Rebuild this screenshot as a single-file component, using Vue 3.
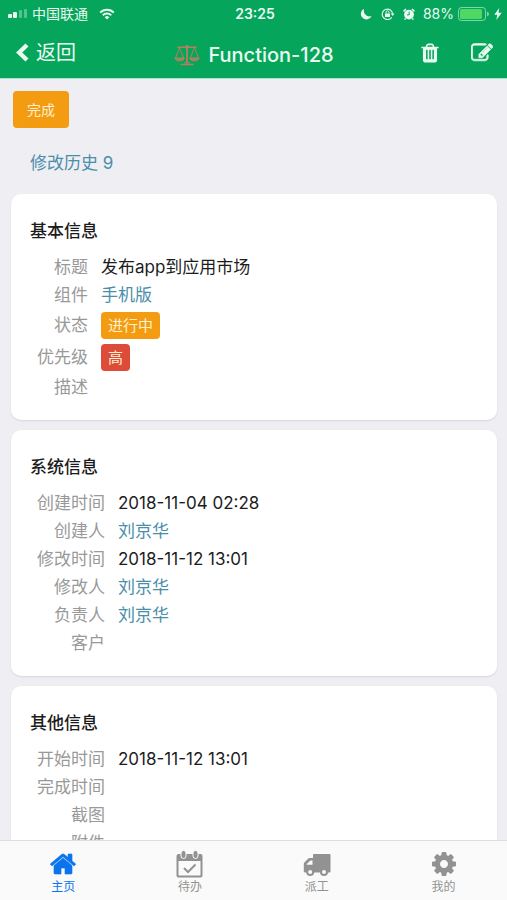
<script setup>
import { ref } from 'vue'

const cards = [
  {
    title: '基本信息',
    rows: [
      { label: '标题', value: '发布app到应用市场' },
      { label: '组件', value: '手机版', type: 'link' },
      { label: '状态', value: '进行中', type: 'badge', tone: 'orange' },
      { label: '优先级', value: '高', type: 'badge', tone: 'red' },
      { label: '描述', value: '' },
    ],
  },
  {
    title: '系统信息',
    rows: [
      { label: '创建时间', value: '2018-11-04 02:28' },
      { label: '创建人', value: '刘京华', type: 'link' },
      { label: '修改时间', value: '2018-11-12 13:01' },
      { label: '修改人', value: '刘京华', type: 'link' },
      { label: '负责人', value: '刘京华', type: 'link' },
      { label: '客户', value: '' },
    ],
  },
  {
    title: '其他信息',
    rows: [
      { label: '开始时间', value: '2018-11-12 13:01' },
      { label: '完成时间', value: '' },
      { label: '截图', value: '' },
      { label: '附件', value: '' },
    ],
  },
]

const tabs = [
  { id: 'home', label: '主页' },
  { id: 'todo', label: '待办' },
  { id: 'dispatch', label: '派工' },
  { id: 'mine', label: '我的' },
]
const active = ref('home')
</script>

<template>
  <div class="app">
    <header class="header">
      <div class="status">
        <div class="status-side">
          <svg class="signal" viewBox="0 0 20 10" aria-hidden="true">
            <rect x="0" y="5" width="4" height="4" rx="1" />
            <rect x="5" y="3" width="4" height="6" rx="1" />
            <rect x="11" y="1" width="3" height="8" rx="1" opacity=".35" />
            <rect x="16" y="0" width="3" height="9" rx="1" opacity=".35" />
          </svg>
          <span>中国联通</span>
          <svg class="wifi" viewBox="0 0 16 12" fill="none" stroke="currentColor" stroke-width="2" aria-hidden="true">
            <path d="M1.2 4.6a9.6 9.6 0 0 1 13.6 0" fill="none" />
            <path d="M3.8 7.3a6 6 0 0 1 8.400 0" fill="none" />
            <path d="M8 11.6 5.7 9.2a3.3 3.3 0 0 1 4.6 0z" fill="currentColor" stroke="none" />
          </svg>
        </div>
        <span class="time">23:25</span>
        <div class="status-side right">
          <svg class="s-icon" viewBox="0 0 12 12" aria-hidden="true">
            <path d="M4.2.7A5.6 5.6 0 1 0 11.6 8 5.7 5.7 0 0 1 4.2.7z" />
          </svg>
          <svg class="s-icon lock" viewBox="0 0 14 12" aria-hidden="true">
            <path d="M10.8 9.2A5.2 5.2 0 1 1 11.6 5.6" fill="none" stroke="currentColor" stroke-width="1.1" />
            <path d="M9.6 5.4h4L11.7 8z" />
            <rect x="4" y="5.5" width="5" height="3.4" rx=".5" />
            <path d="M5 5.6V4.4a1.5 1.5 0 0 1 3 0v1.2" fill="none" stroke="currentColor" />
          </svg>
          <svg class="s-icon alarm" viewBox="0 0 12 12" aria-hidden="true">
            <circle cx="6" cy="6.6" r="4.9" />
            <path d="M.6 3.4 3 1M11.4 3.4 9 1M2.6 10.4l-1 1.2M9.4 10.4l1 1.2" stroke="currentColor" stroke-width="1.5" />
            <path d="M6.2 3.8v3H4" fill="none" stroke="#05a55b" />
          </svg>
          <span class="percent">88%</span>
          <svg class="battery" viewBox="0 0 31 14" aria-hidden="true">
            <rect x=".5" y=".5" width="27" height="13" rx="3" fill="none" stroke="currentColor" opacity=".55" />
            <rect x="2" y="2" width="22" height="10" rx="1.5" fill="#4fd964" />
            <path d="M29 4.5q2 .8 2 2.5t-2 2.5z" opacity=".55" />
          </svg>
          <svg class="bolt" viewBox="0 0 8 12" aria-hidden="true">
            <path d="M5.2 0 .3 6.7h3L2.3 12l5.4-7.2H4.5z" />
          </svg>
        </div>
      </div>

      <nav class="nav">
        <a class="back" href="#back">
          <svg class="chevron" viewBox="0 0 14 20" aria-hidden="true">
            <path d="M12 2 4.200 9.500l7.800 7.500" fill="none" stroke="currentColor" stroke-width="4.400" />
          </svg>
          <span>返回</span>
        </a>
        <h1 class="title">
          <svg class="scale" viewBox="0 0 26 22" stroke="currentColor" aria-hidden="true">
            <path d="M13 1.5v18" stroke-width="1.8" />
            <path d="M3.500 3.200h19M6.500 20.600h13" stroke-width="1.500" />
            <path d="M10 18.800h6" />
            <circle cx="13" cy="3" r="1.400" />
            <path d="M5.500 3.600 1.500 14M5.500 3.600 9.700 14M20.500 3.600 16.300 14M20.500 3.600l4 10.400" />
            <path d="M.800 14h9.600q-.700 3-4.800 3T.800 14zM15.600 14h9.600q-.700 3-4.800 3t-4.800-3z" fill-opacity=".8" />
          </svg>
          <span>Function-128</span>
        </h1>
        <div class="actions">
          <button type="button" class="icon-button" aria-label="删除">
            <svg viewBox="0 0 1792 1792" aria-hidden="true"><path d="M704 1376v-704q0-14-9-23t-23-9h-64q-14 0-23 9t-9 23v704q0 14 9 23t23 9h64q14 0 23-9t9-23zm256 0v-704q0-14-9-23t-23-9h-64q-14 0-23 9t-9 23v704q0 14 9 23t23 9h64q14 0 23-9t9-23zm256 0v-704q0-14-9-23t-23-9h-64q-14 0-23 9t-9 23v704q0 14 9 23t23 9h64q14 0 23-9t9-23zm-544-992h448l-48-117q-7-9-17-11h-317q-10 2-17 11zm928 32v64q0 14-9 23t-23 9h-96v948q0 83-47 143.5t-113 60.5h-832q-66 0-113-58.5t-47-141.5v-952h-96q-14 0-23-9t-9-23v-64q0-14 9-23t23-9h309l70-167q15-37 54-63t79-26h320q40 0 79 26t54 63l70 167h309q14 0 23 9t9 23z" /></svg>
          </button>
          <button type="button" class="icon-button" aria-label="编辑">
            <svg viewBox="0 0 1792 1792" stroke="currentColor" stroke-width="50" aria-hidden="true"><path d="M888 1184l116-116-152-152-116 116v56h96v96h56zm440-720q-16-16-33 1l-350 350q-17 17-1 33t33-1l350-350q17-17 1-33zm80 594v190q0 119-84.5 203.5t-203.5 84.5h-832q-119 0-203.5-84.5t-84.5-203.5v-832q0-119 84.5-203.5t203.5-84.5h832q63 0 117 25 15 7 18 23 3 17-9 29l-49 49q-14 14-32 8-23-6-45-6h-832q-66 0-113 47t-47 113v832q0 66 47 113t113 47h832q66 0 113-47t47-113v-126q0-13 9-22l64-64q15-15 35-7t20 29zm-96-738l288 288-672 672h-288v-288zm444 132l-92 92-288-288 92-92q28-28 68-28t68 28l152 152q28 28 28 68t-28 68z" /></svg>
          </button>
        </div>
      </nav>
    </header>

    <main class="content">
      <button type="button" class="done">完成</button>
      <a class="history" href="#history">修改历史 9</a>

      <section v-for="card in cards" :key="card.title" class="card">
        <h2 class="card-title">{{ card.title }}</h2>
        <dl class="fields">
          <template v-for="row in card.rows" :key="row.label">
            <dt :class="{ tall: row.type === 'badge' }">{{ row.label }}</dt>
            <dd>
              <a v-if="row.type === 'link'" href="#detail">{{ row.value }}</a>
              <span v-else-if="row.type === 'badge'" class="badge" :class="row.tone">{{ row.value }}</span>
              <template v-else>{{ row.value }}</template>
            </dd>
          </template>
        </dl>
      </section>
    </main>

    <nav class="tabbar">
      <button
        v-for="tab in tabs"
        :key="tab.id"
        type="button"
        class="tab"
        :class="{ active: active === tab.id }"
        @click="active = tab.id"
      >
        <svg v-if="tab.id === 'home'" viewBox="0 0 1792 1792" stroke="currentColor" stroke-width="40" aria-hidden="true"><path d="M1472 992v480q0 26-19 45t-45 19h-384v-384h-256v384h-384q-26 0-45-19t-19-45v-480q0-1 .5-3t.5-3l575-474 575 474q1 2 1 6zm223-69l-62 74q-8 9-21 11h-3q-13 0-21-7l-692-577-692 577q-12 8-24 7-13-2-21-11l-62-74q-8-10-7-23.5t11-21.5l719-599q32-26 76-26t76 26l244 204v-195q0-14 9-23t23-9h192q14 0 23 9t9 23v408l219 182q10 8 11 21.5t-7 23.5z" /></svg>
        <svg v-else-if="tab.id === 'todo'" viewBox="0 0 28 28" aria-hidden="true">
          <path d="M2.500 4h22q2 0 2 2v19.500q0 2-2 2h-22q-2 0-2-2V6q0-2 2-2zm0 7v14.500h22V11z" fill-rule="evenodd" />
          <rect x="5" y=".5" width="5" height="8" rx="2.500" class="ring" />
          <rect x="17" y=".5" width="5" height="8" rx="2.500" class="ring" />
          <path d="m8 18 4 4 7.500-7.500" fill="none" stroke="currentColor" stroke-width="2" />
        </svg>
        <svg v-else-if="tab.id === 'dispatch'" viewBox="0 0 28 28" aria-hidden="true">
          <path d="M11 4h15.500q1 0 1 1v16.500q0 1-1 1H2q-1.200 0-1.200-1.200V14q0-1 .7-1.800l3-3Q5.500 8 7 8h3V5q0-1 1-1zM9.500 10.500h-2L3.700 14v.7h5.800z" fill-rule="evenodd" />
          <circle cx="7.200" cy="22" r="3" class="wheel" />
          <circle cx="21" cy="22" r="3" class="wheel" />
        </svg>
        <svg v-else viewBox="0 0 1792 1792" aria-hidden="true"><path d="M1152 896q0-106-75-181t-181-75-181 75-75 181 75 181 181 75 181-75 75-181zm512-109v222q0 12-8 23t-20 13l-185 28q-19 54-39 91 35 50 107 138 10 12 10 25t-9 23q-27 37-99 108t-94 71q-12 0-26-9l-138-108q-44 23-91 38-16 136-29 186-7 28-36 28h-222q-14 0-24.5-8.5t-11.5-21.5l-28-184q-49-16-90-37l-141 107q-10 9-25 9-14 0-25-11-126-114-165-168-7-10-7-23 0-12 8-23 15-21 51-66.5t54-70.5q-27-50-41-99l-183-27q-13-2-21-12.5t-8-23.5v-222q0-12 8-23t19-13l186-28q14-46 39-92-40-57-107-138-10-12-10-24 0-10 9-23 26-36 98.5-107.5t94.5-71.5q13 0 26 10l138 107q44-23 91-38 16-136 29-186 7-28 36-28h222q14 0 24.5 8.5t11.5 21.5l28 184q49 16 90 37l142-107q9-9 24-9 13 0 25 10 129 119 165 170 7 8 7 22 0 12-8 23-15 21-51 66.5t-54 70.5q26 50 41 98l183 28q13 2 21 12.5t8 23.5z" /></svg>
        <span>{{ tab.label }}</span>
      </button>
    </nav>
  </div>
</template>

<style>
body {
  margin: 0;
}
</style>

<style scoped>
.app {
  display: flex;
  flex-direction: column;
  height: 100vh;
  background: #eeeef3;
  color: #1c1c1c;
  font-family: Inter, "Noto Sans CJK SC", sans-serif;
  font-size: 17px;
  line-height: 28px;
}

svg {
  display: block;
  flex: none;
  fill: currentColor;
}

button {
  border: 0;
  padding: 0;
  font: inherit;
  color: inherit;
  background: none;
}

a {
  color: #4b8ea9;
  text-decoration: none;
}

.header {
  flex: none;
  background: #05a55b;
  color: #e9fbf1;
  border-bottom: 1px solid #a5e3c8;
}

.status {
  display: grid;
  grid-template-columns: 1fr auto 1fr;
  align-items: center;
  height: 28px;
  padding: 0 5px 0 8px;
  font-size: 14px;
}

.status-side {
  display: flex;
  align-items: center;
}

.right {
  justify-content: flex-end;
}

.signal {
  width: 20px;
  height: 10px;
  margin-right: 4px;
}

.wifi {
  width: 16px;
  height: 12px;
  margin-left: 11px;
}

.time {
  font-weight: 600;
}

.s-icon {
  width: 12px;
  height: 12px;
  margin-right: 9px;
}

.lock {
  width: 14px;
  margin-right: 8px;
}

.alarm {
  margin-right: 8px;
}

.battery {
  width: 31px;
  height: 14px;
  margin: 0 5px 0 4px;
}

.bolt {
  width: 8px;
  height: 12px;
}

.nav {
  display: grid;
  grid-template-columns: 1fr auto 1fr;
  align-items: center;
  height: 50px;
  padding: 0 14px 0 15px;
}

.back {
  display: flex;
  align-items: center;
  gap: 7px;
  color: inherit;
  font-size: 20px;
}

.chevron {
  width: 14px;
  height: 20px;
}

.title {
  display: flex;
  align-items: center;
  gap: 8px;
  margin: 0;
  padding-top: 4px;
  font-size: 20px;
  font-weight: 500;
}

.scale {
  width: 26px;
  height: 22px;
  color: #b5805f;
}

.actions {
  display: flex;
  justify-content: flex-end;
  gap: 30px;
}

.icon-button svg {
  width: 22px;
  height: 22px;
}

.content {
  flex: 1;
  min-height: 0;
  overflow: hidden;
  padding: 12px 10px 0 11px;
}

.done {
  display: block;
  height: 37px;
  margin-left: 2px;
  padding: 0 14px;
  border-radius: 4px;
  background: #f39c12;
  color: #fff0cf;
  font-size: 14px;
}

.history {
  display: block;
  margin: 21px 0 17px 19px;
}

.card {
  margin-bottom: 10px;
  padding: 23px 20px 19px 19px;
  border-radius: 10px;
  background: #fff;
  box-shadow: 0 1px 2px rgba(0, 0, 0, 0.1);
}

.card-title {
  margin: 0 0 8px;
  font-size: 17px;
  font-weight: 500;
}

.fields {
  display: grid;
  grid-template-columns: auto 1fr;
  column-gap: 13px;
  margin: 0;
  padding-left: 7px;
}

dt {
  min-height: 28px;
  color: #999;
  text-align: right;
}

.tall {
  line-height: 32px;
}

dd {
  display: flex;
  align-items: center;
  margin: 0;
}

.badge {
  padding: 0 7px;
  border-radius: 4px;
  color: #fff0cf;
  font-size: 15px;
  line-height: 27px;
}

.orange {
  background: #f39c12;
}

.red {
  background: #dd4b39;
}

.tabbar {
  display: flex;
  flex: none;
  height: 59px;
  border-top: 1px solid #dedee0;
  background: #fafafa;
}

.tab {
  display: flex;
  flex: 1;
  flex-direction: column;
  align-items: center;
  padding-top: 9px;
  color: #929292;
  font-size: 12px;
  line-height: 18px;
}

.tab svg {
  width: 28px;
  height: 28px;
}

.tab.active {
  color: #0a74ec;
}

.ring {
  fill: #929292;
  stroke: #fafafa;
  stroke-width: 1;
}

.wheel {
  fill: #fafafa;
  stroke: #929292;
  stroke-width: 2;
}
</style>
